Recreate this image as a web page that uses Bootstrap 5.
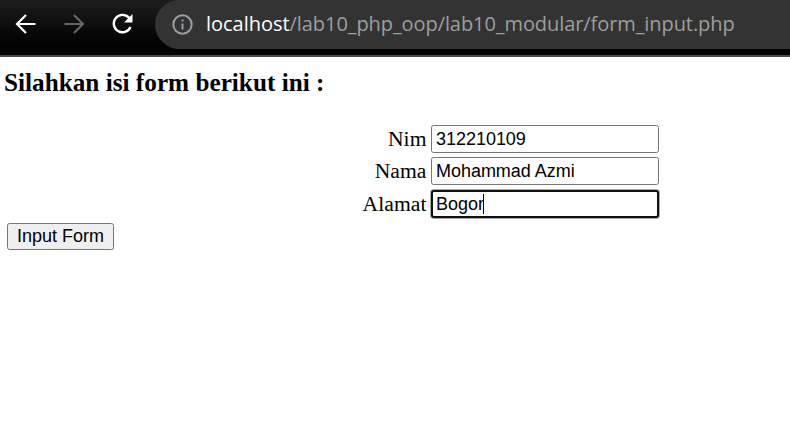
<!DOCTYPE html>
<html lang="id">
<head>
<meta charset="utf-8">
<meta name="viewport" content="width=device-width, initial-scale=1">
<title>Form Input</title>
<link href="https://cdn.jsdelivr.net/npm/bootstrap@5.3.0/dist/css/bootstrap.min.css" rel="stylesheet">
<style>
body{font-family:"Liberation Serif",serif;font-size:21.6px;color:#000;background:#fff}
.toolbar{height:57px;background:linear-gradient(#1c1c1c,#030303 42px,#000);border-bottom:2px solid #4b4949;padding-left:15px}
.nav-icons{width:140px;height:47px;gap:26px}
.omnibox{height:49px;background:#333;border-radius:25px 0 0 25px;padding-left:17px}
.url{font-family:"Open Sans","Noto Sans",sans-serif;font-size:20px;line-height:28px;color:#9e9e9e;margin-left:13px;padding-bottom:2px;letter-spacing:-.08px}
.url b{font-weight:400;color:#fff;letter-spacing:-.02px}
.title-line{font-size:25.2px;line-height:29px;margin:11px 0 28px 4px;letter-spacing:.02px}
.label-col{width:426.5px;text-align:right;line-height:28px;letter-spacing:.06px}
.field-row{height:28px;margin-bottom:4px}
.field-row + .field-row{margin-bottom:5px}
.field{width:228px;height:28px;border:1px solid #767676;border-radius:2.5px;padding:0 4px;font:18px "Liberation Sans",sans-serif;letter-spacing:-.03px;color:#000;outline:0;margin-left:4.5px}
.field-active{border:2px solid #101010;padding:0 3px;border-radius:3px;box-shadow:0 0 0 1px #aaa}
.caret{left:483px;top:4px;width:1px;height:20px;background:#000}
.send{width:107px;height:27px;border:1px solid #767676;border-radius:2.5px;background:#efefef;font:18px/23px "Liberation Sans",sans-serif;color:#000;margin-left:7px}
</style>
<script src="https://cdn.jsdelivr.net/npm/bootstrap@5.3.0/dist/js/bootstrap.bundle.min.js"></script>
</head>
<body class="overflow-hidden">
<header class="toolbar d-flex align-items-start">
  <div class="nav-icons d-flex align-items-center flex-shrink-0">
    <svg width="22" height="22" viewBox="0 0 22 22" fill="none" stroke="#fff" stroke-width="2.2"><path d="M20.5 11H2.5M11 2 2 11l9 9"/></svg>
    <svg width="22" height="22" viewBox="0 0 22 22" fill="none" stroke="#666" stroke-width="2.2"><path d="M1.5 11h18M11 2l9 9-9 9"/></svg>
    <svg width="24" height="24" viewBox="0 0 24 24" fill="none"><path d="M19.5 15a8.7 8.7 0 1 1-1.5-9.2L19.5 8" stroke="#fff" stroke-width="2.4"/><path d="M21.5 2v8.5H13z" fill="#fff"/></svg>
  </div>
  <div class="omnibox d-flex align-items-center flex-grow-1">
    <svg class="flex-shrink-0" width="21" height="21" viewBox="0 0 21 21"><circle cx="10.5" cy="10.5" r="9.2" fill="none" stroke="#9aa0a6" stroke-width="2"/><path d="M9.5 9.5h2v6h-2zM9.5 5.5h2v2h-2z" fill="#9aa0a6"/></svg>
    <div class="url text-nowrap"><b>localhost</b>/lab10_php_oop/lab10_modular/form_input.php</div>
  </div>
</header>
<main>
  <h3 class="title-line fw-bold">Silahkan isi form berikut ini :</h3>
  <form>
    <div class="field-row d-flex"><label class="label-col" for="nim">Nim</label><input class="field" id="nim" value="312210109"></div>
    <div class="field-row d-flex"><label class="label-col" for="nama">Nama</label><input class="field" id="nama" value="Mohammad Azmi"></div>
    <div class="field-row d-flex position-relative"><label class="label-col" for="alamat">Alamat</label><input class="field field-active" id="alamat" value="Bogor"><span class="caret position-absolute"></span></div>
    <button class="send d-block p-0" type="button">Input Form</button>
  </form>
</main>
</body>
</html>
